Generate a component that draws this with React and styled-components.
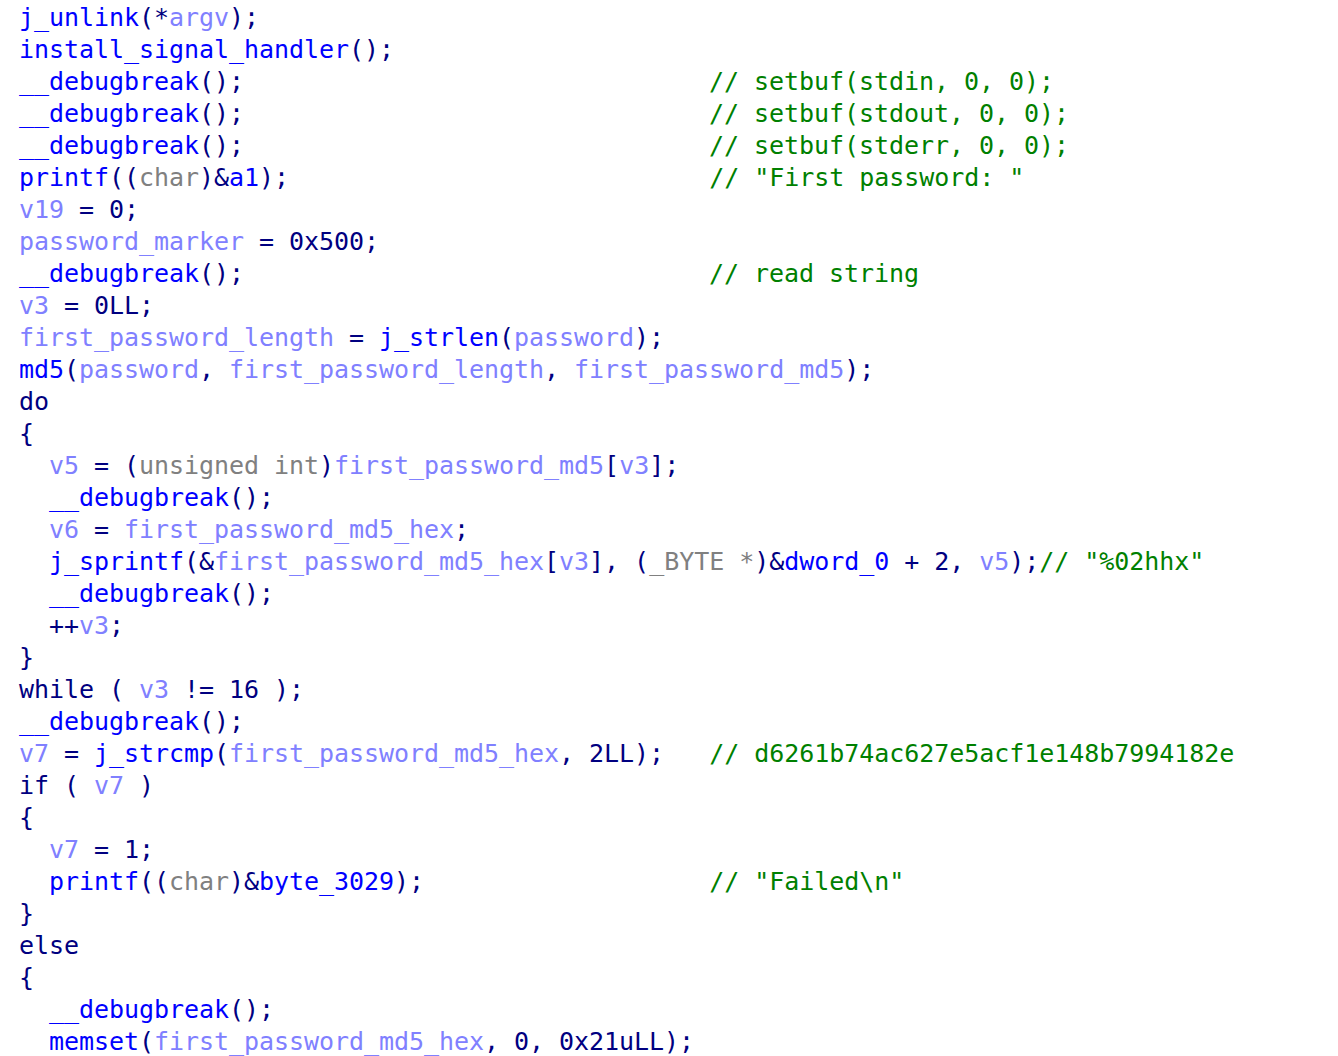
import React from 'react';
import styled, { createGlobalStyle } from 'styled-components';

const GlobalStyle = createGlobalStyle`
  html, body {
    margin: 0;
    background: #ffffff;
  }
`;

const colors = {
  p: '#000080', // keywords, punctuation, numbers
  f: '#0000ff', // functions, named data
  v: '#8080ff', // local variables
  t: '#808080', // types
  c: '#008000', // comments
};

const COMMENT_COL = 46;

const Pane = styled.pre`
  margin: 0;
  padding: 2px 0 0 19px;
  font-family: "DejaVu Sans Mono", "Liberation Mono", monospace;
  font-size: 25px;
  letter-spacing: -0.05px;
  line-height: 32px;
  color: ${colors.p};
  background: #fff;
  white-space: pre;
`;

const Line = styled.div`
  height: 32px;
`;

const Tok = styled.span`
  color: ${(p) => colors[p.$kind] || colors.p};
`;

// each line: list of [kind, text]; a trailing comment string goes to the comment column
const src = [
  [[['f', 'j_unlink'], ['p', '(*'], ['v', 'argv'], ['p', ');']]],
  [[['f', 'install_signal_handler'], ['p', '();']]],
  [[['f', '__debugbreak'], ['p', '();']], '// setbuf(stdin, 0, 0);'],
  [[['f', '__debugbreak'], ['p', '();']], '// setbuf(stdout, 0, 0);'],
  [[['f', '__debugbreak'], ['p', '();']], '// setbuf(stderr, 0, 0);'],
  [[['f', 'printf'], ['p', '(('], ['t', 'char'], ['p', ')&'], ['f', 'a1'], ['p', ');']], '// "First password: "'],
  [[['v', 'v19'], ['p', ' = 0;']]],
  [[['v', 'password_marker'], ['p', ' = 0x500;']]],
  [[['f', '__debugbreak'], ['p', '();']], '// read string'],
  [[['v', 'v3'], ['p', ' = 0LL;']]],
  [[['v', 'first_password_length'], ['p', ' = '], ['f', 'j_strlen'], ['p', '('], ['v', 'password'], ['p', ');']]],
  [[['f', 'md5'], ['p', '('], ['v', 'password'], ['p', ', '], ['v', 'first_password_length'], ['p', ', '], ['v', 'first_password_md5'], ['p', ');']]],
  [[['p', 'do']]],
  [[['p', '{']]],
  [[['p', '  '], ['v', 'v5'], ['p', ' = ('], ['t', 'unsigned int'], ['p', ')'], ['v', 'first_password_md5'], ['p', '['], ['v', 'v3'], ['p', '];']]],
  [[['p', '  '], ['f', '__debugbreak'], ['p', '();']]],
  [[['p', '  '], ['v', 'v6'], ['p', ' = '], ['v', 'first_password_md5_hex'], ['p', ';']]],
  [[['p', '  '], ['f', 'j_sprintf'], ['p', '(&'], ['v', 'first_password_md5_hex'], ['p', '['], ['v', 'v3'], ['p', '], ('], ['t', '_BYTE *'], ['p', ')&'], ['f', 'dword_0'], ['p', ' + 2, '], ['v', 'v5'], ['p', ');']], '// "%02hhx"'],
  [[['p', '  '], ['f', '__debugbreak'], ['p', '();']]],
  [[['p', '  ++'], ['v', 'v3'], ['p', ';']]],
  [[['p', '}']]],
  [[['p', 'while ( '], ['v', 'v3'], ['p', ' != 16 );']]],
  [[['f', '__debugbreak'], ['p', '();']]],
  [[['v', 'v7'], ['p', ' = '], ['f', 'j_strcmp'], ['p', '('], ['v', 'first_password_md5_hex'], ['p', ', 2LL);']], '// d6261b74ac627e5acf1e148b7994182e'],
  [[['p', 'if ( '], ['v', 'v7'], ['p', ' )']]],
  [[['p', '{']]],
  [[['p', '  '], ['v', 'v7'], ['p', ' = 1;']]],
  [[['p', '  '], ['f', 'printf'], ['p', '(('], ['t', 'char'], ['p', ')&'], ['f', 'byte_3029'], ['p', ');']], '// "Failed\\n"'],
  [[['p', '}']]],
  [[['p', 'else']]],
  [[['p', '{']]],
  [[['p', '  '], ['f', '__debugbreak'], ['p', '();']]],
  [[['p', '  '], ['f', 'memset'], ['p', '('], ['v', 'first_password_md5_hex'], ['p', ', 0, 0x21uLL);']]],
];

const lines = src.map(([toks, comment]) => {
  if (!comment) return toks;
  const len = toks.reduce((n, [, t]) => n + t.length, 0);
  const pad = Math.max(0, COMMENT_COL - len);
  return [...toks, ['p', ' '.repeat(pad)], ['c', comment]];
});

export default function App() {
  return (
    <>
      <GlobalStyle />
      <Pane>
        {lines.map((line, i) => (
          <Line key={i}>
            {line.map(([kind, text], j) => (
              <Tok key={j} $kind={kind}>{text}</Tok>
            ))}
          </Line>
        ))}
      </Pane>
    </>
  );
}
